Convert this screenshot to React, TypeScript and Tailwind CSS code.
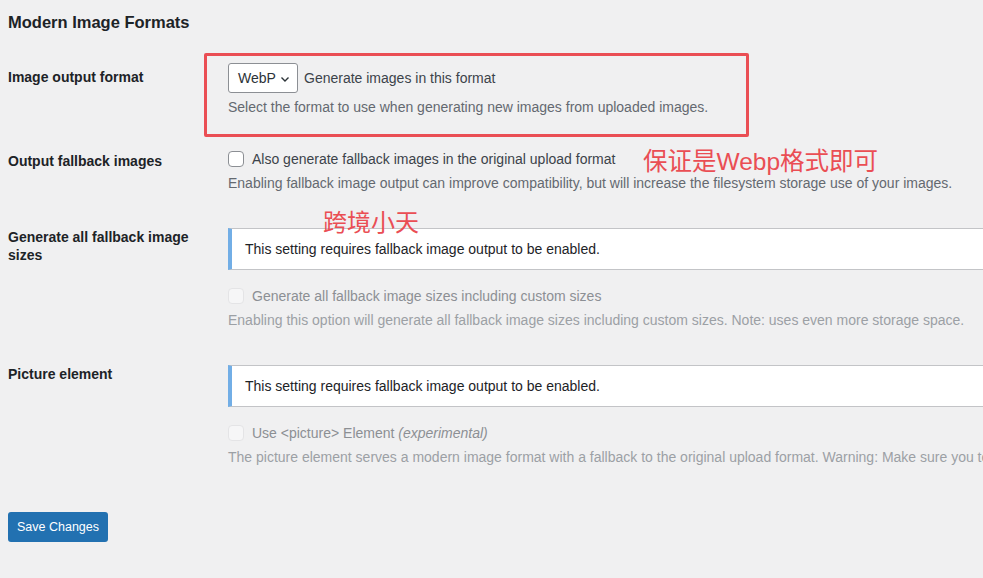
import React from "react";

const font = { fontFamily: '"Liberation Sans", "Noto Sans CJK SC", sans-serif' };

function Notice() {
  return (
    <div className="mt-[5px] mb-[14px] w-[820px] bg-white border border-[#c3c4c7] border-l-4 border-l-[#72aee6] pl-[13px] py-[10px] leading-[20px] text-[14px] text-[#1d2327] whitespace-nowrap">
      This setting requires fallback image output to be enabled.
    </div>
  );
}

function Checkbox({ disabled }: { disabled?: boolean }) {
  return (
    <span
      className={`inline-block w-4 h-4 rounded-[4px] border mr-[8px] shrink-0 ${
        disabled ? "border-[#e4e4e6] bg-[#f6f6f7]" : "border-[#8c8f94] bg-white"
      }`}
    />
  );
}

function Label({ children }: { children: React.ReactNode }) {
  return (
    <div className="w-[220px] shrink-0 pt-[20px] pr-[30px] text-[14px] leading-[18px] font-semibold text-[#1d2327]">
      {children}
    </div>
  );
}

export default function App() {
  return (
    <div className="w-[983px] h-[578px] overflow-hidden bg-[#f0f0f1] px-2 relative" style={font}>
      <h2 className="pt-[11px] text-[16.5px] leading-[22px] font-semibold text-[#1d2327]">
        Modern Image Formats
      </h2>

      {/* row 1 */}
      <div className="flex mt-[15px]">
        <Label>Image output format</Label>
        <div className="pt-[15px] pb-[15px] relative">
          <div className="flex items-center">
            <div className="flex items-center justify-between w-[70px] h-[30px] bg-white border border-[#8c8f94] rounded-[3px] pl-[9px] pr-[5px] pt-[1px] text-[14px] text-[#2c3338]">
              <span>WebP</span>
              <svg width="14" height="14" viewBox="0 0 20 20" fill="none" stroke="#2c3338" strokeWidth="2">
                <path d="M5 8l5 5 5-5" />
              </svg>
            </div>
            <span className="ml-[6px] pt-[1px] text-[14px] text-[#3c434a]">Generate images in this format</span>
          </div>
          <p className="mt-[4px] leading-[20px] text-[14px] text-[#646970] whitespace-nowrap">
            Select the format to use when generating new images from uploaded images.
          </p>
          <div className="absolute left-[-24px] top-[5px] w-[545px] h-[84px] border-[3px] border-[#ea4e54] rounded-[2px] pointer-events-none" />
        </div>
      </div>

      {/* row 2 */}
      <div className="flex">
        <Label>Output fallback images</Label>
        <div className="pt-[15px] pb-[15px] relative">
          <div className="flex items-center leading-[24px] text-[14px] text-[#3c434a]">
            <Checkbox />
            Also generate fallback images in the original upload format
          </div>
          <p className="mt-[2px] leading-[20px] text-[14px] text-[#646970] whitespace-nowrap">
            Enabling fallback image output can improve compatibility, but will increase the filesystem storage use of your images.
          </p>
          <div className="absolute left-[415px] top-[15px] text-[24.5px] leading-[30px] text-[#ea4e54] whitespace-nowrap pointer-events-none">
            保证是Webp格式即可
          </div>
          <div className="absolute left-[95px] top-[76px] text-[24px] leading-[30px] text-[#ea4e54] whitespace-nowrap pointer-events-none">
            跨境小天
          </div>
        </div>
      </div>

      {/* row 3 */}
      <div className="flex">
        <Label>Generate all fallback image sizes</Label>
        <div className="pt-[15px] pb-[15px]">
          <Notice />
          <div className="flex items-center leading-[24px] text-[14px] text-[#8c8f94]">
            <Checkbox disabled />
            Generate all fallback image sizes including custom sizes
          </div>
          <p className="mt-[2px] leading-[20px] text-[14px] text-[#9ca0a5] whitespace-nowrap">
            Enabling this option will generate all fallback image sizes including custom sizes. Note: uses even more storage space.
          </p>
        </div>
      </div>

      {/* row 4 */}
      <div className="flex">
        <Label>Picture element</Label>
        <div className="pt-[15px] pb-[15px]">
          <Notice />
          <div className="flex items-center leading-[24px] text-[14px] text-[#8c8f94]">
            <Checkbox disabled />
            <span>
              Use &lt;picture&gt; Element <em>(experimental)</em>
            </span>
          </div>
          <p className="mt-[2px] leading-[20px] text-[14px] text-[#9ca0a5] whitespace-nowrap">
            The picture element serves a modern image format with a fallback to the original upload format. Warning: Make sure you test your theme.
          </p>
        </div>
      </div>

      <button className="mt-[30px] h-[30px] w-[100px] rounded-[3px] bg-[#2271b1] text-white text-[12.5px]">
        Save Changes
      </button>
    </div>
  );
}
